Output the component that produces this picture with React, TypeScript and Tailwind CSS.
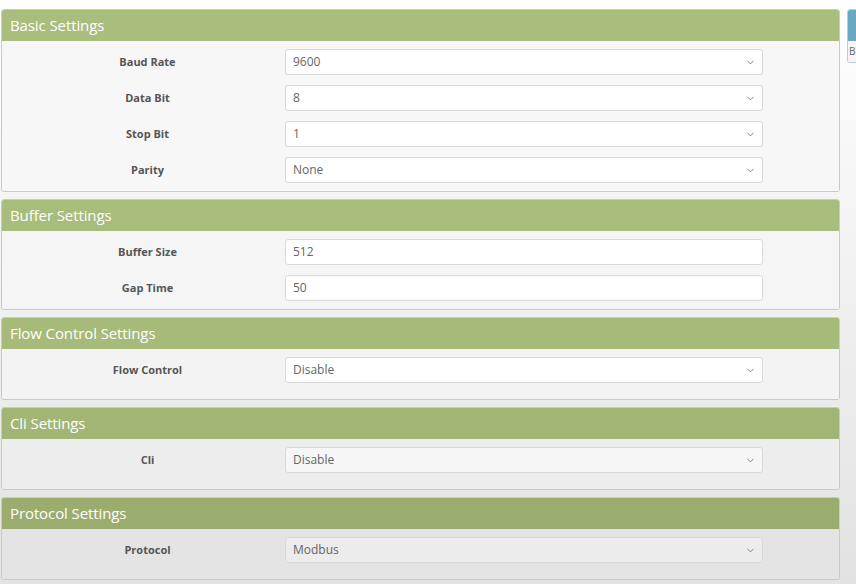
import { ChevronDown } from 'lucide-react'

interface Field {
  label: string
  value: string
  kind: 'select' | 'input'
}

interface Section {
  title: string
  fields: Field[]
  head: string
  body: string
  box: string
}

const sections: Section[] = [
  {
    title: 'Basic Settings',
    head: 'bg-[#a9bd7d]',
    body: 'bg-[#f7f7f7]',
    box: 'bg-white',
    fields: [
      { label: 'Baud Rate', value: '9600', kind: 'select' },
      { label: 'Data Bit', value: '8', kind: 'select' },
      { label: 'Stop Bit', value: '1', kind: 'select' },
      { label: 'Parity', value: 'None', kind: 'select' }
    ]
  },
  {
    title: 'Buffer Settings',
    head: 'bg-[#a8bc7b]',
    body: 'bg-[#f5f5f5]',
    box: 'bg-white',
    fields: [
      { label: 'Buffer Size', value: '512', kind: 'input' },
      { label: 'Gap Time', value: '50', kind: 'input' }
    ]
  },
  {
    title: 'Flow Control Settings',
    head: 'bg-[#a6ba79]',
    body: 'bg-[#f3f3f3]',
    box: 'bg-white',
    fields: [{ label: 'Flow Control', value: 'Disable', kind: 'select' }]
  },
  {
    title: 'Cli Settings',
    head: 'bg-[#a2b575]',
    body: 'bg-[#ededed]',
    box: 'bg-[#f6f6f6]',
    fields: [{ label: 'Cli', value: 'Disable', kind: 'select' }]
  },
  {
    title: 'Protocol Settings',
    head: 'bg-[#9bad6e]',
    body: 'bg-[#e4e4e4]',
    box: 'bg-[#ececec]',
    fields: [{ label: 'Protocol', value: 'Modbus', kind: 'select' }]
  }
]

function Panel({ section }: { section: Section }) {
  return (
    <div className="border border-[#c5d3a9] rounded-[3px] overflow-hidden">
      {/* Header */}
      <div className={`h-[31px] flex items-center px-[8px] ${section.head}`}>
        <h2 className="text-[15px] text-white tracking-[-0.1px]">{section.title}</h2>
      </div>

      <div className={`min-h-[50px] pt-2 pb-2 px-2 flex flex-col gap-[10px] ${section.body}`}>
        {section.fields.map((field) => (
          <div key={field.label} className="flex items-center">
            <label className="w-[275px] text-center text-[11px] font-bold text-[#555555]">
              {field.label}
            </label>
            <div
              className={`w-[478px] h-[26px] border border-[#d9d9d9] rounded-[3px] flex items-center justify-between pl-[7px] pr-[6px] ${section.box}`}
            >
              <span className="text-[12px] text-[#666666]">{field.value}</span>
              {field.kind === 'select' && (
                <ChevronDown size={11} strokeWidth={2} className="text-[#777777]" />
              )}
            </div>
          </div>
        ))}
      </div>
    </div>
  )
}

export default function App() {
  return (
    <div
      className="w-[856px] h-[584px] overflow-hidden bg-linear-to-b from-white to-[#e2e2e2] flex gap-[7px] pt-[9px] pl-[1px]"
      style={{ fontFamily: '"Open Sans", "Noto Sans", sans-serif' }}
    >
      {/* Settings column */}
      <div className="w-[839px] flex flex-col gap-[7px] shrink-0">
        {sections.map((section) => (
          <Panel key={section.title} section={section} />
        ))}
      </div>

      {/* Side panel, cut off by the window */}
      <div className="w-[40px] shrink-0">
        <div className="border border-[#b9cdd8] rounded-[3px] overflow-hidden">
          <div className="h-[31px] bg-[#6aa7c3]" />
          <div className="h-[21px] bg-[#f5f5f5] flex items-center pl-[1px]">
            <span className="text-[10px] text-[#666666]">B</span>
          </div>
        </div>
      </div>
    </div>
  )
}
